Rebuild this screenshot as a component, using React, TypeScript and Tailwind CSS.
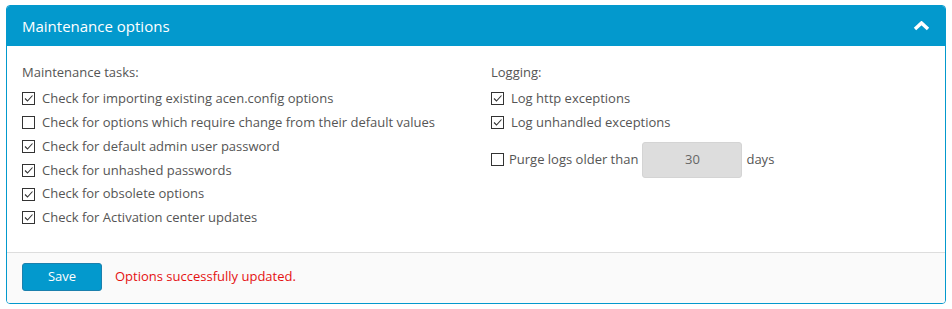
import { ReactNode } from 'react';

const tasks = [
  { label: 'Check for importing existing acen.config options', checked: true },
  { label: 'Check for options which require change from their default values', checked: false },
  { label: 'Check for default admin user password', checked: true },
  { label: 'Check for unhashed passwords', checked: true },
  { label: 'Check for obsolete options', checked: true },
  { label: 'Check for Activation center updates', checked: true },
];

function Box({ checked }: { checked: boolean }) {
  return (
    <span className="w-[13px] h-[13px] border border-[#333] bg-white flex items-center justify-center shrink-0">
      {checked && (
        <svg width="11" height="11" viewBox="0 0 11 11" fill="none">
          <path d="M2 5.5 L4.5 8 L9.5 2.5" stroke="#333" strokeWidth="1.1" />
        </svg>
      )}
    </span>
  );
}

function CheckRow({ checked, children }: { checked: boolean; children: ReactNode }) {
  return (
    <label className="flex items-center gap-[7px] h-[23.8px]">
      <Box checked={checked} />
      <span>{children}</span>
    </label>
  );
}

export default function App() {
  return (
    <div className="pt-[5px] px-[6px] bg-white h-[309px] text-[13px] text-[#555]" style={{ fontFamily: '"Open Sans", "Liberation Sans", sans-serif' }}>
      <div className="border border-[#0399cd] rounded-[4px] overflow-hidden">
        <div className="h-[40px] bg-[#0399cd] flex items-center justify-between pl-[15px] pr-[15px]">
          <span className="text-white text-[15px]">Maintenance options</span>
          <svg width="17" height="10" viewBox="0 0 17 10" fill="none">
            <path d="M2 8 L8.5 2 L15 8" stroke="white" strokeWidth="3.5" />
          </svg>
        </div>
        <div className="grid grid-cols-2 pt-[16px] pb-[22px]">
          <div className="px-[15px]">
            <div className="leading-[20px] mb-[5px]">Maintenance tasks:</div>
            {tasks.map((t, i) => (
              <CheckRow key={i} checked={t.checked}>{t.label}</CheckRow>
            ))}
          </div>
          <div className="px-[15px]">
            <div className="leading-[20px] mb-[5px]">Logging:</div>
            <CheckRow checked={true}>Log http exceptions</CheckRow>
            <CheckRow checked={true}>Log unhandled exceptions</CheckRow>
            <div className="flex items-center mt-[7px]">
              <Box checked={false} />
              <span className="ml-[5px]">Purge logs older than</span>
              <div className="ml-[4px] w-[100px] h-[36px] bg-[#ddd] border border-[#d4d4d4] rounded-[3px] flex items-center justify-center text-[#666]">30</div>
              <span className="ml-[4px]">days</span>
            </div>
          </div>
        </div>
        <div className="border-t border-[#ddd] bg-[#fafafa] h-[51px] pt-[10px] px-[15px] flex items-start">
          <button className="w-[80px] h-[28px] bg-[#0399cd] border border-[#1b80ad] rounded-[3px] text-white text-[13px]">Save</button>
          <span className="ml-[13px] mt-[4px] text-[#e51111]">Options successfully updated.</span>
        </div>
      </div>
    </div>
  );
}
